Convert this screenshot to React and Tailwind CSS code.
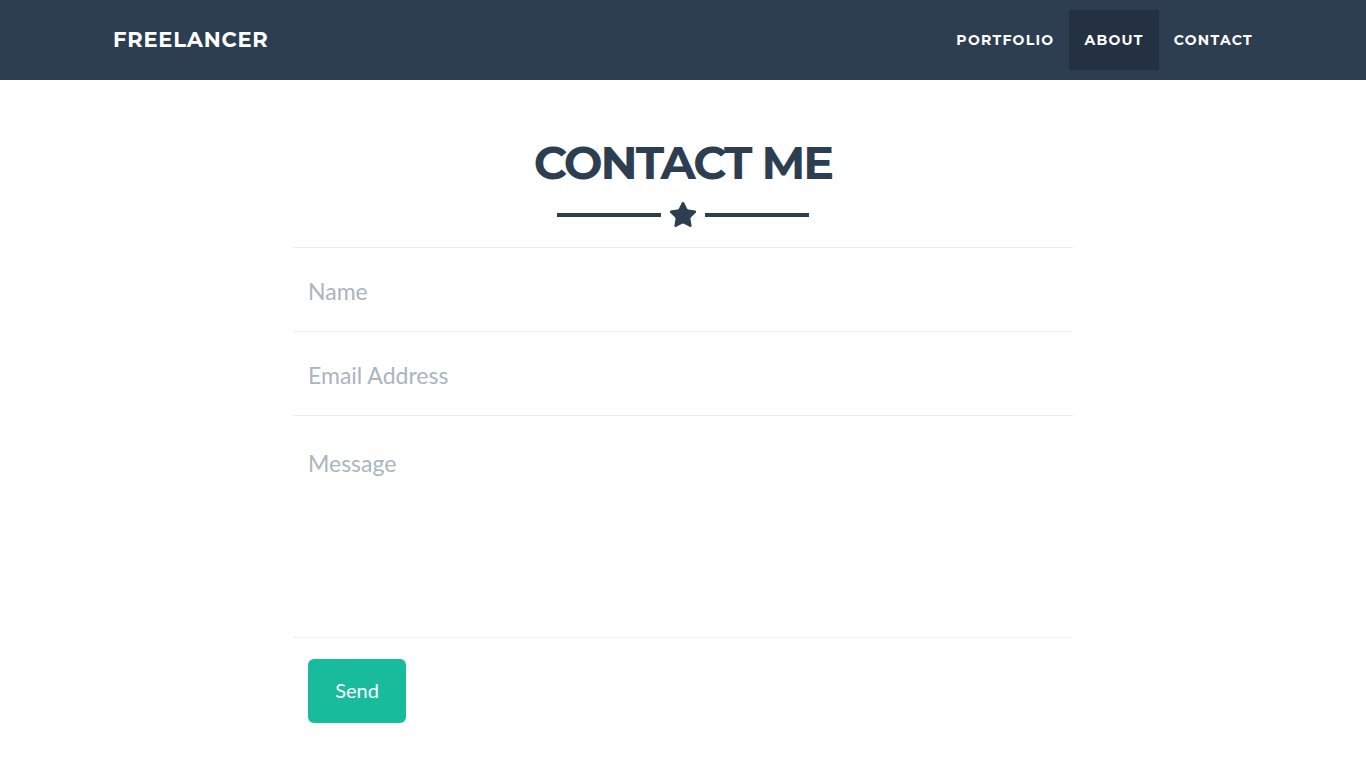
import { Star } from 'lucide-react';

const navLinks = [
  { label: 'PORTFOLIO', active: false },
  { label: 'ABOUT', active: true },
  { label: 'CONTACT', active: false },
];

function Field({ placeholder, tall }) {
  return (
    <div className="border-b border-[#eeeeee] px-[15px]">
      {tall ? (
        <textarea
          rows={5}
          placeholder={placeholder}
          className="block w-full h-[221px] resize-none pt-[33px] text-[23px] leading-[1.3] text-[#2c3e50] placeholder:text-[#a9b5c1] outline-none bg-transparent"
        />
      ) : (
        <input
          type="text"
          placeholder={placeholder}
          className="block w-full h-[83px] pt-[2px] text-[23px] text-[#2c3e50] placeholder:text-[#a9b5c1] outline-none bg-transparent"
        />
      )}
    </div>
  );
}

export default function App() {
  return (
    <div className="min-h-screen bg-white font-['Lato',sans-serif]">
      <nav className="bg-[#2c3e50] h-20">
        <div className="w-[1140px] mx-auto h-full flex items-center justify-between">
          <a className="text-white text-[21px] font-bold font-['Montserrat','Open_Sans',sans-serif] tracking-[0.8px]">
            FREELANCER
          </a>
          <ul className="flex items-center -mr-[15px]">
            {navLinks.map(link => (
              <li key={link.label}>
                <a className={`block px-[15px] h-[60px] leading-[60px] text-white text-[14px] font-bold tracking-[1.3px] font-['Montserrat','Open_Sans',sans-serif] ${link.active ? 'bg-[#233140]' : ''}`}>
                  {link.label}
                </a>
              </li>
            ))}
          </ul>
        </div>
      </nav>

      <section className="pt-[60px]">
        <h2 className="text-center text-[#2c3e50] text-[46px] leading-none font-bold tracking-[-2px] font-['Montserrat','Open_Sans',sans-serif]">
          CONTACT ME
        </h2>
        <div className="flex items-center justify-center gap-[7px] mt-[14px]">
          <div className="w-[104px] h-1 bg-[#2c3e50]" />
          <Star size={30} fill="#2c3e50" color="#2c3e50" strokeWidth={1} />
          <div className="w-[104px] h-1 bg-[#2c3e50]" />
        </div>

        <form className="w-[780px] mx-auto mt-[17px] border-t border-[#eeeeee]">
          <Field placeholder="Name" />
          <Field placeholder="Email Address" />
          <Field placeholder="Message" tall />
          <div className="px-[15px] pt-[21px]">
            <button type="button" className="w-[98px] h-[64px] pb-[3px] rounded-md bg-[#18bc9c] text-white text-[20px]">
              Send
            </button>
          </div>
        </form>
      </section>
    </div>
  );
}
